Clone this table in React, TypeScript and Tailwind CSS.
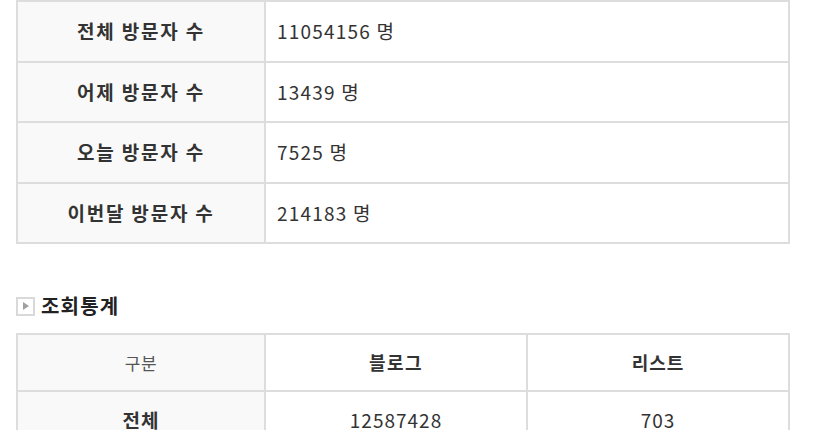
import React from "react";

const font = { fontFamily: '"Noto Sans CJK KR", "Noto Sans", sans-serif' };

const visitors = [
  { label: "전체 방문자 수", value: "11054156 명", h: "h-[59px]" },
  { label: "어제 방문자 수", value: "13439 명", h: "h-[60px] border-t-2 border-[#dddddd]" },
  { label: "오늘 방문자 수", value: "7525 명", h: "h-[61px] border-t-2 border-[#dddddd]" },
  { label: "이번달 방문자 수", value: "214183 명", h: "h-[60px] border-t-2 border-[#dddddd]" },
];

export default function App() {
  return (
    <div className="w-[820px] h-[430px] bg-white overflow-hidden text-[#333]" style={font}>
      <div className="ml-[16px] w-[774px] border-2 border-[#dddddd]">
        {visitors.map((r) => (
          <div key={r.label} className={`grid grid-cols-[248px_1fr] ${r.h}`}>
            <div className="bg-[#f9f9f9] border-r-2 border-[#dddddd] flex items-center justify-center text-[19px] font-bold text-[#333] tracking-[1.8px]">
              {r.label}
            </div>
            <div className="flex items-center pl-[11px] text-[19px] text-[#333] tracking-[1.2px]">
              {r.value}
            </div>
          </div>
        ))}
      </div>

      <div className="ml-[16px] mt-[52px] flex items-center gap-[6px] h-[20px]">
        <div className="w-[19px] h-[19px] border-2 border-[#d9d9d9] flex items-center justify-center">
          <svg width="6" height="8" viewBox="0 0 6 8">
            <path d="M0 0 L6 4 L0 8 Z" fill="#a0a0a0" />
          </svg>
        </div>
        <span className="text-[20px] font-bold text-[#222] tracking-[1.2px]">조회통계</span>
      </div>

      <div className="ml-[16px] mt-[17px] w-[774px] border-2 border-[#dddddd]">
        <div className="grid grid-cols-[248px_262px_1fr] h-[55px]">
          <div className="bg-[#f9f9f9] border-r-2 border-[#dddddd] flex items-center justify-center text-[17px] text-[#555] tracking-[0.5px]">
            구분
          </div>
          <div className="border-r-2 border-[#dddddd] flex items-center justify-center text-[18px] font-bold text-[#333] tracking-[1.5px]">
            블로그
          </div>
          <div className="flex items-center justify-center text-[18px] font-bold text-[#333] tracking-[1px]">
            리스트
          </div>
        </div>
        <div className="grid grid-cols-[248px_262px_1fr] h-[58px] border-t-2 border-[#dddddd]">
          <div className="bg-[#f9f9f9] border-r-2 border-[#dddddd] flex items-center justify-center text-[19px] font-bold text-[#333] tracking-[1px]">
            전체
          </div>
          <div className="border-r-2 border-[#dddddd] flex items-center justify-center text-[19px] text-[#333] tracking-[1px]">
            12587428
          </div>
          <div className="flex items-center justify-center text-[19px] text-[#333] tracking-[1px]">
            703
          </div>
        </div>
      </div>
    </div>
  );
}
